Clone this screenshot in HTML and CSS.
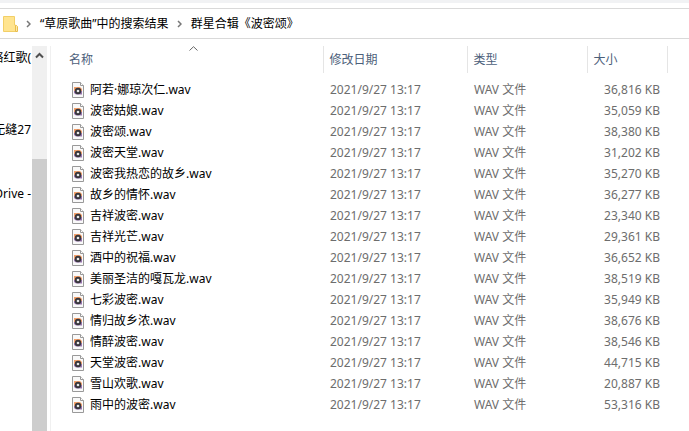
FILE: index.html
```
<!DOCTYPE html>
<html lang="zh-CN">

<head>
  <meta charset="UTF-8">
  <meta name="viewport" content="width=device-width, initial-scale=1.0">
  <title>群星合辑《波密颂》</title>
  <link rel="stylesheet" href="styles.css">
</head>

<body>
  <header>
    <nav class="address">
      <svg class="folder" width="15" height="16" viewBox="0 0 15 16">
        <path d="M0.500 0.500H11.500V9H12.500V15.500H0.500Z" fill="#ffe48f" stroke="#f2cf67" />
        <path d="M12.500 9.500V15.500H14.500V10.500L13.500 9.500Z" fill="#ffe9a8" stroke="#e8bd4c" />
      </svg>
      <svg class="sep" width="5" height="8" viewBox="0 0 5 8">
        <path d="M1 1L4 4L1 7" fill="none" stroke="#777" stroke-width="1.500" />
      </svg>
      <a href="#">“草原歌曲”中的搜索结果</a>
      <svg class="sep" width="5" height="8" viewBox="0 0 5 8">
        <path d="M1 1L4 4L1 7" fill="none" stroke="#777" stroke-width="1.500" />
      </svg>
      <a href="#">群星合辑《波密颂》</a>
    </nav>
  </header>
  <main>
    <aside>
      <ul class="tree">
        <li>网络红歌(</li>
        <li></li>
        <li></li>
        <li>无缝27</li>
        <li></li>
        <li class="drive">OneDrive -</li>
      </ul>
      <div class="scrollbar">
        <button class="up" aria-label="向上滚动">
          <svg width="9" height="7" viewBox="0 0 9 7">
            <path d="M1 5.500L4.500 2L8 5.500" fill="none" stroke="#505050" stroke-width="2" />
          </svg>
        </button>
        <div class="thumb"></div>
      </div>
    </aside>
    <section class="files">
      <table>
        <thead>
          <tr>
            <th class="name">名称
              <svg class="sort" width="9" height="5" viewBox="0 0 9 5">
                <path d="M0.500 4.500L4.500 0.700L8.500 4.500" fill="none" stroke="#666" />
              </svg>
            </th>
            <th class="date">修改日期</th>
            <th class="type">类型</th>
            <th class="size">大小</th>
            <th></th>
          </tr>
        </thead>
        <tbody id="list"></tbody>
      </table>
    </section>
  </main>

  <script src="files.js"></script>
</body>

</html>
```
FILE: styles.css
```
* {
  box-sizing: border-box;
  margin: 0;
  padding: 0;
}

body {
  height: 100vh;
  display: flex;
  flex-direction: column;
  overflow: hidden;
  background-color: white;
  color: black;
  font-family: "Noto Sans", "Noto Sans CJK SC", sans-serif;
  font-size: 12px;
  line-height: 20px;
}

header {
  padding-top: 5px;
  border-top: 3px solid #f1f2f4;
}

.address {
  height: 31px;
  display: flex;
  align-items: center;
  border-top: 1px solid #d9d9d9;
  border-bottom: 1px solid #d9d9d9;
  padding-left: 3px;
  white-space: nowrap;
}

.address a {
  color: black;
  text-decoration: none;
}

.sep {
  margin: 0 9px 0 8px;
}

main {
  flex: 1;
  min-height: 0;
  display: flex;
  padding-top: 7px;
}

aside {
  width: 51px;
  flex: none;
  display: flex;
  border-right: 1px solid #f0f0f0;
}

.tree {
  width: 32px;
  overflow: hidden;
  list-style: none;
}

.tree li {
  height: 24px;
  line-height: 24px;
  padding-right: 1px;
  display: flex;
  justify-content: flex-end;
  white-space: nowrap;
}

.tree .drive {
  margin-top: 16px;
}

.scrollbar {
  width: 15px;
  display: flex;
  flex-direction: column;
  background-color: #f0f0f0;
}

.up {
  width: 100%;
  height: 18px;
  display: flex;
  align-items: center;
  justify-content: center;
  border: none;
  background: none;
}

.thumb {
  flex: 1;
  margin-top: 95px;
  background-color: #cdcdcd;
}

.files {
  flex: 1;
}

table {
  width: 100%;
  table-layout: fixed;
  border-collapse: collapse;
}

th {
  height: 27px;
  padding-left: 6px;
  border-right: 1px solid #e5e5e5;
  color: #4c607a;
  font-weight: normal;
  text-align: left;
}

th:last-child {
  border: none;
}

.name {
  width: 272px;
  padding-left: 18px;
  position: relative;
}

.date {
  width: 144px;
}

.type {
  width: 120px;
}

.size {
  width: 80px;
}

.sort {
  position: absolute;
  top: 0;
  left: 51%;
}

/* gap between the header and the first file */
tbody::before {
  content: "";
  display: block;
  height: 6px;
}

td {
  height: 21px;
  padding-left: 7px;
  color: #6d6d6d;
  white-space: nowrap;
}

td:first-child {
  padding-left: 21px;
  color: black;
}

td:nth-child(4) {
  padding-right: 7px;
  text-align: right;
}

.file {
  display: flex;
  align-items: center;
  gap: 6px;
}
```
FILE: files.js
```
const list = document.querySelector('#list')

const files = [
  ['阿若·娜琼次仁.wav', '36,816 KB'],
  ['波密姑娘.wav', '35,059 KB'],
  ['波密颂.wav', '38,380 KB'],
  ['波密天堂.wav', '31,202 KB'],
  ['波密我热恋的故乡.wav', '35,270 KB'],
  ['故乡的情怀.wav', '36,277 KB'],
  ['吉祥波密.wav', '23,340 KB'],
  ['吉祥光芒.wav', '29,361 KB'],
  ['酒中的祝福.wav', '36,652 KB'],
  ['美丽圣洁的嘎瓦龙.wav', '38,519 KB'],
  ['七彩波密.wav', '35,949 KB'],
  ['情归故乡浓.wav', '38,676 KB'],
  ['情醉波密.wav', '38,546 KB'],
  ['天堂波密.wav', '44,715 KB'],
  ['雪山欢歌.wav', '20,887 KB'],
  ['雨中的波密.wav', '53,316 KB']
]

const icon = `
  <svg width="12" height="16" viewBox="0 0 12 16">
    <path d="M0.5 0.500H8.500L11.500 3.500V15.500H0.500Z" fill="#f9f9f9" stroke="#999"/>
    <path d="M8.500 0.500V3.500H11.500" fill="#fff" stroke="#999"/>
    <path d="M2 9V5H8L10 7V9Z" fill="#f3a06a"/>
    <path d="M2 9H10V12.500H4L2 11Z" fill="#9a76b0"/>
    <circle cx="6" cy="9" r="3.2" fill="#37363b"/>
    <circle cx="6" cy="9" r="1.3" fill="#e8e8e8"/>
  </svg>`

list.innerHTML = files.map(([name, size]) => `
  <tr>
    <td><div class="file">${icon}<span>${name}</span></div></td>
    <td>2021/9/27 13:17</td>
    <td>WAV 文件</td>
    <td>${size}</td>
    <td></td>
  </tr>`).join('')
```
